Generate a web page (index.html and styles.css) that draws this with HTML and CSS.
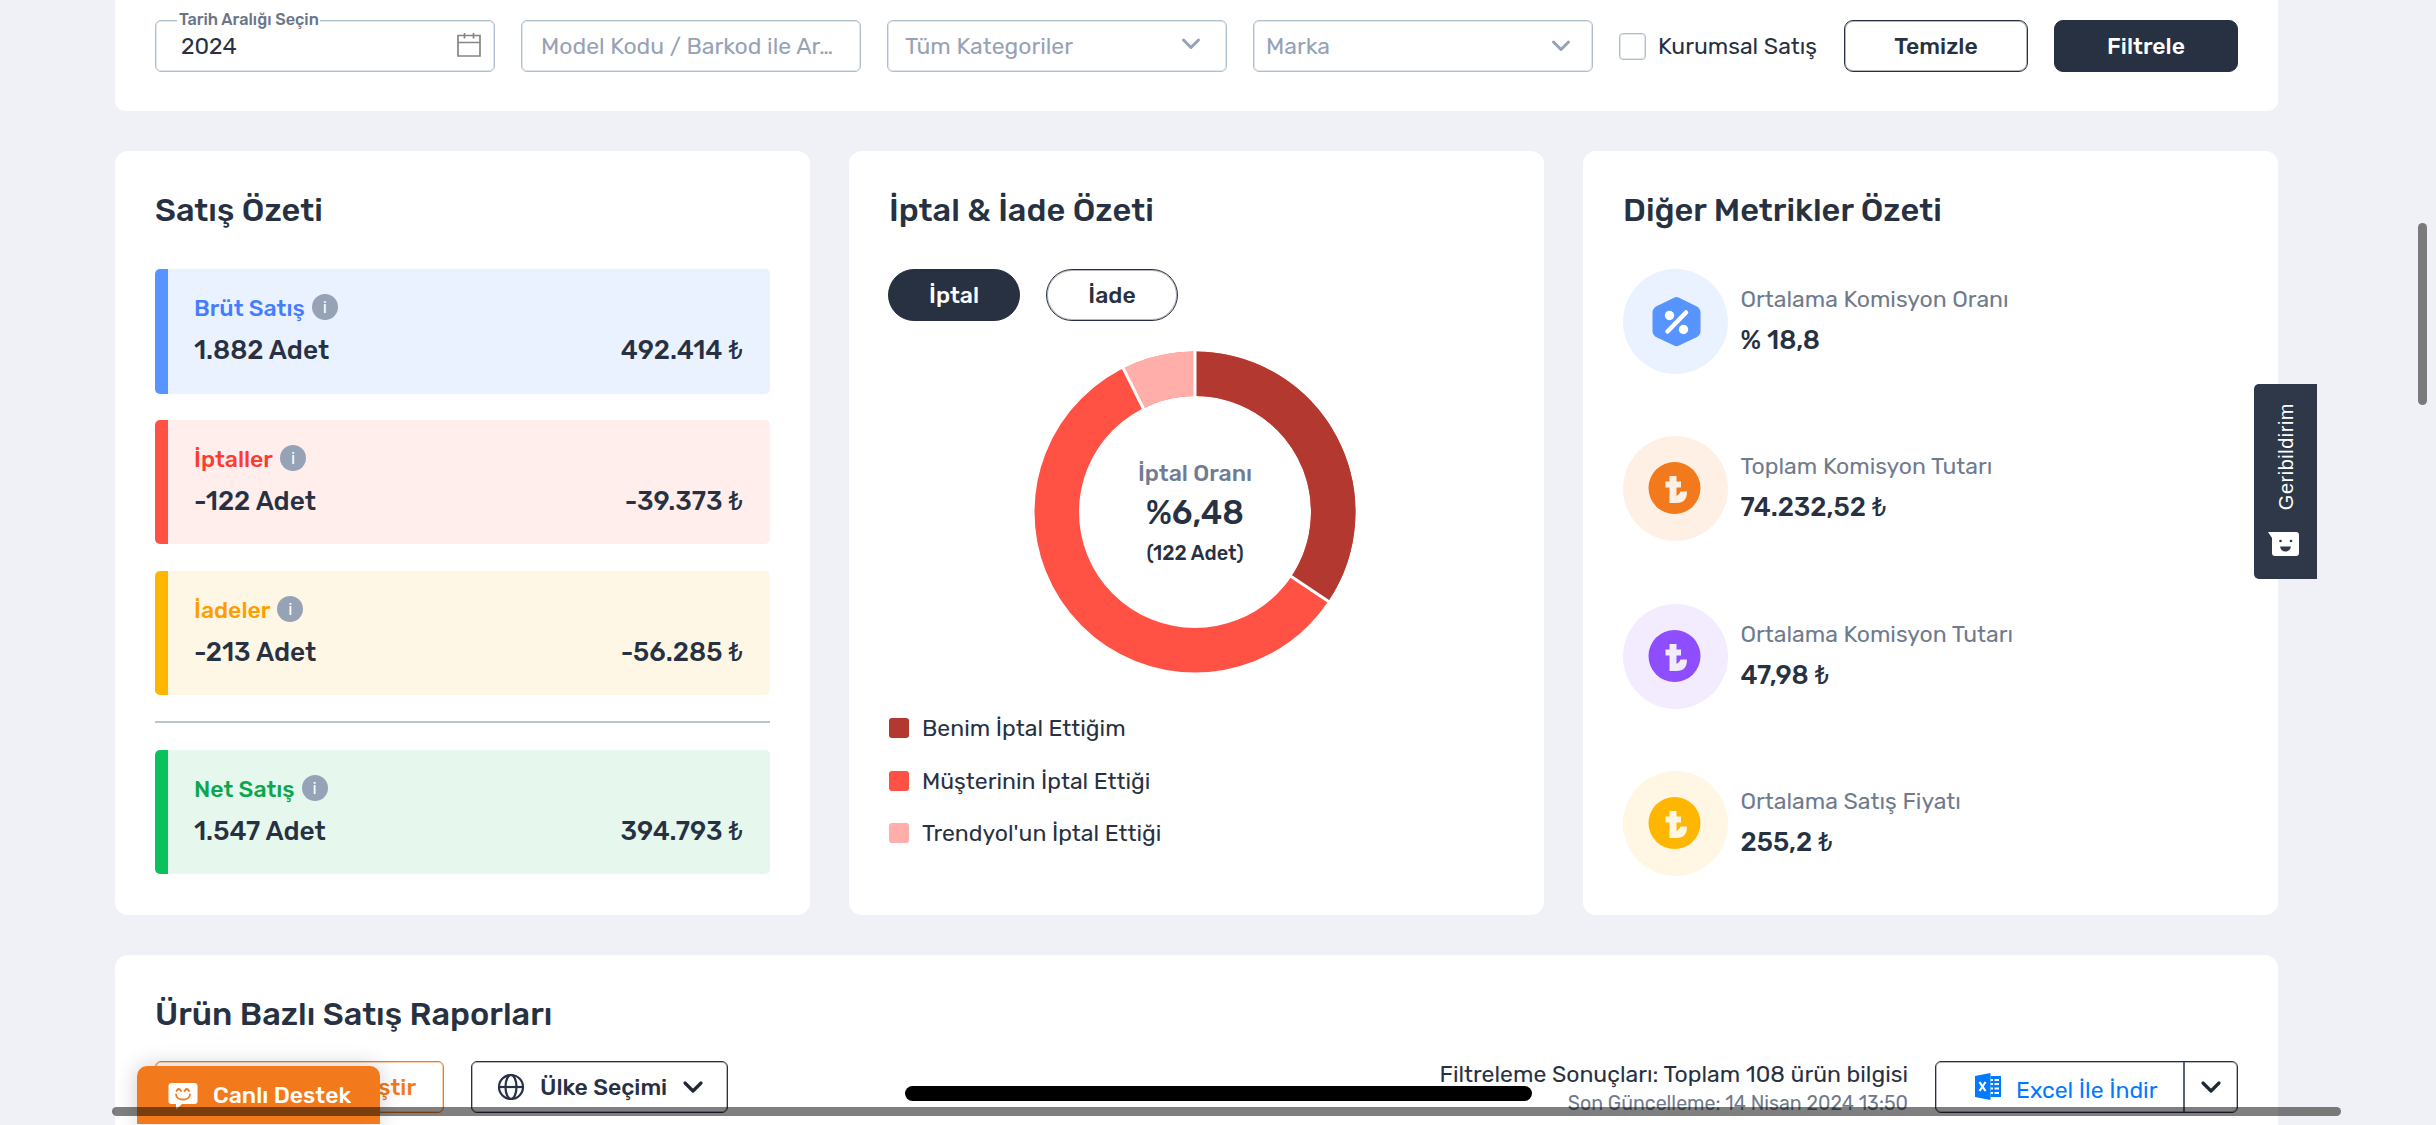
FILE: index.html
```html
<!DOCTYPE html>
<html lang="tr">
<head>
  <meta charset="UTF-8" />
  <title>Satış Raporları</title>
  <meta name="viewport" content="width=device-width, initial-scale=1" />
  <link rel="stylesheet" href="styles.css">
</head>
<body>
  <main class="page">
    <section class="card filters">
      <div class="field field-date">
        <span class="field-label">Tarih Aralığı Seçin</span>
        <span class="field-value">2024</span>
        <svg class="calendar" width="26" height="28" viewBox="0 0 26 28" fill="none" stroke="#858585" stroke-width="1.7">
          <path d="M2 4.5h22v20.500H2zM2 11.500h22M8.500 2v5.500M17.500 2v5.500" />
        </svg>
      </div>
      <div class="field field-text">Model Kodu / Barkod ile Ar…</div>
      <div class="field field-category">
        <span>Tüm Kategoriler</span>
        <svg class="arrow arrow-up" width="20" height="14" viewBox="0 0 20 14"><path d="M2.500 3l7.500 7.500L17.500 3" /></svg>
      </div>
      <div class="field field-brand">
        <span>Marka</span>
        <svg class="arrow" width="20" height="14" viewBox="0 0 20 14"><path d="M2.500 3l7.500 7.500L17.500 3" /></svg>
      </div>
      <label class="check"><span class="box"></span>Kurumsal Satış</label>
      <button class="btn">Temizle</button>
      <button class="btn btn-dark">Filtrele</button>
    </section>

    <div class="columns">
      <section class="card">
        <h2>Satış Özeti</h2>
        <div class="rows">
          <div class="row blue">
            <div class="row-title">Brüt Satış <span class="info">i</span></div>
            <div class="row-values"><span>1.882 Adet</span><span>492.414 <i>₺</i></span></div>
          </div>
          <div class="row red">
            <div class="row-title">İptaller <span class="info">i</span></div>
            <div class="row-values"><span>-122 Adet</span><span>-39.373 <i>₺</i></span></div>
          </div>
          <div class="row yellow">
            <div class="row-title">İadeler <span class="info">i</span></div>
            <div class="row-values"><span>-213 Adet</span><span>-56.285 <i>₺</i></span></div>
          </div>
          <hr>
          <div class="row green">
            <div class="row-title">Net Satış <span class="info">i</span></div>
            <div class="row-values"><span>1.547 Adet</span><span>394.793 <i>₺</i></span></div>
          </div>
        </div>
      </section>

      <section class="card">
        <h2>İptal &amp; İade Özeti</h2>
        <div class="pills">
          <button class="pill active">İptal</button>
          <button class="pill">İade</button>
        </div>
        <div class="donut">
          <svg width="322" height="322" viewBox="-161 -161 322 322">
            <g fill="none" stroke-width="44.500">
              <circle r="138.250" stroke="#ff5144" />
              <path d="M0 -138.250A138.250 138.250 0 0 1 114.880 76.910" stroke="#b23830" />
              <path d="M-61.690 -123.720A138.250 138.250 0 0 1 0 -138.250" stroke="#ffaea9" />
            </g>
            <path d="M0 -114v-49M94.700 63.400L135.500 90.700M-50.900 -102L-72.800 -145.900" stroke="#fff" stroke-width="3" />
          </svg>
          <div class="donut-text">
            <span class="donut-label">İptal Oranı</span>
            <span class="donut-value">%6,48</span>
            <span class="donut-count">(122 Adet)</span>
          </div>
        </div>
        <ul class="legend">
          <li><span class="swatch dark"></span>Benim İptal Ettiğim</li>
          <li><span class="swatch mid"></span>Müşterinin İptal Ettiği</li>
          <li><span class="swatch light"></span>Trendyol'un İptal Ettiği</li>
        </ul>
      </section>

      <section class="card">
        <h2>Diğer Metrikler Özeti</h2>
        <div class="metrics">
          <div class="metric">
            <div class="metric-icon percent">
              <svg width="105" height="105" viewBox="0 0 105 105">
                <path d="M51 28.700q2.500-1.200 5 0l17 8.200q4.500 2.500 4.500 6.500v18.500q0 4-4.500 6.500l-17 8.200q-2.500 1.200-5 0l-17-8.200q-4.500-2.500-4.500-6.500v-18.500q0-4 4.500-6.500z" fill="#5794ff" />
                <path d="M44.500 62.500L63 43.500" stroke="#fff" stroke-width="4.500" stroke-linecap="round" />
                <circle cx="46.500" cy="46.500" r="4.700" fill="#fff" />
                <circle cx="60.500" cy="60.500" r="4.700" fill="#fff" />
              </svg>
            </div>
            <div class="metric-text"><span>Ortalama Komisyon Oranı</span><strong>% 18,8</strong></div>
          </div>
          <div class="metric">
            <div class="metric-icon orange">
              <svg width="105" height="105" viewBox="0 0 105 105">
                <circle cx="51.500" cy="52" r="26" fill="#f37a1c" />
                <path d="M46.500 40h7v5.500h4.500v6h-4.500v8.500q3-1 4-4.500h6.500q0 11.500-10.500 11.500h-7v-15.500h-4v-6h4z" fill="#fff0e6" />
              </svg>
            </div>
            <div class="metric-text"><span>Toplam Komisyon Tutarı</span><strong>74.232,52 <i>₺</i></strong></div>
          </div>
          <div class="metric">
            <div class="metric-icon purple">
              <svg width="105" height="105" viewBox="0 0 105 105">
                <circle cx="51.500" cy="52" r="26" fill="#8e4dff" />
                <path d="M46.500 40h7v5.500h4.500v6h-4.500v8.500q3-1 4-4.500h6.500q0 11.500-10.500 11.500h-7v-15.500h-4v-6h4z" fill="#f3ecff" />
              </svg>
            </div>
            <div class="metric-text"><span>Ortalama Komisyon Tutarı</span><strong>47,98 <i>₺</i></strong></div>
          </div>
          <div class="metric">
            <div class="metric-icon amber">
              <svg width="105" height="105" viewBox="0 0 105 105">
                <circle cx="51.500" cy="52" r="26" fill="#ffb600" />
                <path d="M46.500 40h7v5.500h4.500v6h-4.500v8.500q3-1 4-4.500h6.500q0 11.500-10.500 11.500h-7v-15.500h-4v-6h4z" fill="#fff7e3" />
              </svg>
            </div>
            <div class="metric-text"><span>Ortalama Satış Fiyatı</span><strong>255,2 <i>₺</i></strong></div>
          </div>
        </div>
      </section>
    </div>

    <section class="card reports">
      <h2>Ürün Bazlı Satış Raporları</h2>
      <div class="toolbar">
        <button class="btn btn-orange">ştir</button>
        <button class="btn btn-country">
          <svg width="28" height="28" viewBox="0 0 28 28" fill="none" stroke="#273142" stroke-width="2.200">
            <circle cx="14" cy="14" r="12" />
            <ellipse cx="14" cy="14" rx="5.500" ry="12" />
            <path d="M2 14h24" />
          </svg>
          <span>Ülke Seçimi</span>
          <svg class="arrow arrow-dark" width="22" height="14" viewBox="0 0 22 14"><path d="M3 3l8 8L19 3" /></svg>
        </button>
        <div class="result">
          <span>Filtreleme Sonuçları: Toplam 108 ürün bilgisi</span>
          <small>Son Güncelleme: 14 Nisan 2024 13:50</small>
        </div>
        <div class="excel">
          <div class="excel-main">
            <svg width="27" height="27" viewBox="0 0 27 27">
              <path d="M0 3L15.500 0v27L0 24z" fill="#007bff" />
              <path d="M4.500 9l6 9M10.500 9l-6 9" stroke="#fff" stroke-width="2.200" />
              <path d="M15.500 3H26v21H15.500v-3h2.500v-2h-2.500v-2.500h2.500v-2h-2.500v-2.500h2.500v-2h-2.500V8h2.500V6h-2.500z" fill="#007bff" />
              <path d="M19.500 7h4.500M19.500 11h4.500M19.500 15.500h4.500M19.500 20h4.500" stroke="#fff" stroke-width="2" />
            </svg>
            <span>Excel İle İndir</span>
          </div>
          <div class="excel-more">
            <svg class="arrow arrow-dark" width="22" height="14" viewBox="0 0 22 14"><path d="M3 3l8 8L19 3" /></svg>
          </div>
        </div>
      </div>
    </section>
  </main>

  <div class="feedback">
    <span>Geribildirim</span>
    <svg width="32" height="26" viewBox="0 0 32 26">
      <path d="M0 1h28q3 0 3 3v18q0 3-3 3H7q-3 0-3-3V7z" fill="#fff" />
      <path d="M12 15.500h11q-1 5-5.500 5t-5.500-5z" fill="#2f3848" />
      <circle cx="12.500" cy="10" r="1.300" fill="#2f3848" />
      <circle cx="23" cy="10" r="1.300" fill="#2f3848" />
    </svg>
  </div>

  <div class="support">
    <svg width="30" height="27" viewBox="0 0 30 27">
      <path d="M3.500 0h23q3 0 3 3v15q0 3-3 3H14l-6 5.500V21H3.500q-3 0-3-3V3q0-3 3-3z" fill="#fff" />
      <path d="M8.500 8q2.300-4 4.600 0M16.500 8q2.300-4 4.600 0M8 11.500q.5 5 7 5t7-5" fill="none" stroke="#f37a1c" stroke-width="1.800" stroke-linecap="round" />
    </svg>
    <span>Canlı Destek</span>
  </div>

  <div class="home-bar"></div>
  <div class="scroll-x"></div>
  <div class="scroll-y"></div>
</body>
</html>
```

FILE: styles.css
```css
* {
  box-sizing: border-box;
}
body {
  margin: 0;
  height: 1125px;
  overflow: hidden;
  position: relative;
  background: #f0f1f7;
  color: #273142;
  font-family: Rubik, Roboto, sans-serif;
  font-size: 23px;
  line-height: 30px;
}
button {
  font: inherit;
  color: inherit;
}
svg {
  display: block;
  flex: none;
}
.page {
  width: 2163px;
  margin-left: 115px;
}
.card {
  background: #fff;
  border-radius: 13px;
  padding: 40px;
}
h2 {
  margin: 0 0 40px;
  font-size: 32.6px;
  line-height: 38px;
  font-weight: 500;
}

/* filters */
.filters {
  display: flex;
  gap: 26px;
  height: 111px;
  padding: 20px 40px 0;
  border-radius: 0 0 10px 10px;
}
.field {
  position: relative;
  flex: none;
  display: flex;
  align-items: center;
  justify-content: space-between;
  width: 340px;
  height: 52px;
  border: 1px solid #b0bed0;
  box-shadow: inset 0 0 0 1px rgba(176, 190, 208, 0.4);
  border-radius: 6px;
  color: #96a2b6;
}
.field-date {
  padding: 0 12px 0 25px;
  color: #273142;
}
.calendar {
  margin-top: -2px;
}
.field-label {
  position: absolute;
  left: 21px;
  top: -11px;
  padding: 0 1px 0 2px;
  background: #fff;
  color: #6b7588;
  font-size: 16.3px;
  line-height: 20px;
  font-weight: 500;
  white-space: nowrap;
}
.field-text {
  padding-left: 19px;
}
.field-category {
  padding: 0 25px 0 17px;
}
.field-brand {
  padding: 0 21px 0 12px;
}
.arrow {
  fill: none;
  stroke: #96a2b6;
  stroke-width: 3;
  stroke-linecap: round;
  stroke-linejoin: round;
}
.arrow-up {
  margin-top: -4px;
}
.arrow-dark {
  stroke: #1f2733;
  stroke-width: 3.2;
}
.check {
  flex: 1;
  display: flex;
  align-items: center;
  gap: 12px;
  height: 52px;
  white-space: nowrap;
}
.box {
  flex: none;
  width: 27px;
  height: 27px;
  border: 1px solid #b0bed0;
  box-shadow: inset 0 0 0 1px rgba(176, 190, 208, 0.4);
  border-radius: 4px;
}
.btn {
  flex: none;
  width: 184px;
  height: 52px;
  padding: 0;
  background: #fff;
  border: 1px solid #273142;
  box-shadow: inset 0 0 0 1px rgba(39, 49, 66, 0.35);
  border-radius: 9px;
  font-weight: 500;
}
.btn-dark {
  background: #273142;
  color: #fff;
}

/* summary columns */
.columns {
  display: grid;
  grid-template-columns: repeat(3, 1fr);
  gap: 39px;
  margin: 40px 0;
}
.columns .card {
  height: 764px;
}
.rows {
  display: flex;
  flex-direction: column;
  gap: 26.3px;
}
.row {
  height: 124.5px;
  padding: 24px 27px 0 26px;
  border-left: 13px solid;
  border-radius: 5px;
}
.row-title {
  display: flex;
  align-items: center;
  gap: 7px;
  font-weight: 500;
}
.row-values {
  display: flex;
  justify-content: space-between;
  margin-top: 13px;
  font-size: 26.2px;
  font-weight: 500;
}
i {
  font-style: normal;
  font-weight: 400;
}
.info {
  width: 26px;
  height: 26px;
  margin-bottom: 2px;
  border-radius: 50%;
  background: #96a2b6;
  color: #fff;
  font-size: 17px;
  line-height: 26px;
  font-weight: 400;
  text-align: center;
}
.blue { border-color: #5794ff; background: #ebf2ff; }
.blue .row-title { color: #447eff; }
.red { border-color: #ff5144; background: #ffeeec; }
.red .row-title { color: #ff3a2f; }
.yellow { border-color: #ffb600; background: #fff7e5; }
.yellow .row-title { color: #ff9d00; }
.green { border-color: #0bc15c; background: #e6f7ed; }
.green .row-title { color: #0ba74d; }
hr {
  width: 100%;
  height: 2px;
  margin: 0;
  border: 0;
  background: #bac5d2;
}

.pills {
  display: flex;
  gap: 26px;
  margin-left: -1px;
}
.pill {
  width: 132px;
  height: 52px;
  padding: 0;
  background: #fff;
  border: 1px solid #273142;
  box-shadow: inset 0 0 0 1px rgba(39, 49, 66, 0.35);
  border-radius: 26px;
  font-weight: 500;
}
.pill.active {
  background: #273142;
  color: #fff;
}
.donut {
  display: grid;
  justify-items: center;
  align-items: center;
  margin: 30px 0 40px -3px;
}
.donut > * {
  grid-area: 1 / 1;
}
.donut-text {
  display: flex;
  flex-direction: column;
  align-items: center;
  font-weight: 500;
}
.donut-label {
  color: #717c90;
}
.donut-value {
  margin-top: 6px;
  font-size: 33px;
  line-height: 38px;
}
.donut-count {
  margin-top: 8px;
  font-size: 19.9px;
  line-height: 26px;
}
.legend {
  display: flex;
  flex-direction: column;
  gap: 22.5px;
  margin: 0;
  padding: 0;
  list-style: none;
}
.legend li {
  display: flex;
  align-items: center;
  gap: 13px;
}
.swatch {
  width: 20px;
  height: 20px;
  border-radius: 3px;
}
.dark { background: #b23830; }
.mid { background: #ff5144; }
.light { background: #ffaea9; }

.metrics {
  display: flex;
  flex-direction: column;
  gap: 62.3px;
  margin-left: -0.5px;
}
.metric {
  display: flex;
  gap: 13px;
}
.metric-icon {
  width: 105px;
  height: 105px;
  border-radius: 50%;
}
.percent { background: #ebf2ff; }
.orange { background: #fff0e6; }
.purple { background: #f3ecff; }
.amber { background: #fff7e3; }
.metric-text {
  display: flex;
  flex-direction: column;
  gap: 12px;
  padding-top: 15px;
  color: #6f7b8d;
}
.metric-text strong {
  color: #273142;
  font-size: 26.2px;
  font-weight: 500;
}

/* reports */
.reports {
  height: 200px;
}
.reports h2 {
  margin-bottom: 28px;
}
.toolbar {
  display: flex;
}
.toolbar .btn {
  border-radius: 6px;
}
.toolbar .btn-orange {
  width: 289px;
  padding-right: 27px;
  border-color: #f37a1c;
  box-shadow: inset 0 0 0 1px rgba(243, 122, 28, 0.35);
  color: #f37a1c;
  text-align: right;
}
.toolbar .btn-country {
  display: flex;
  align-items: center;
  width: 257px;
  margin-left: 27px;
  padding-left: 25px;
}
.btn-country span {
  margin: 0 15px;
}
.result {
  display: flex;
  flex-direction: column;
  align-items: flex-end;
  margin: -2px 27px 0 auto;
}
.result small {
  font-size: 19.6px;
  line-height: 26px;
  margin-top: 2px;
  color: #6f7b8d;
}
.excel {
  display: flex;
  width: 303px;
  height: 52px;
  border: 1px solid #273142;
  box-shadow: inset 0 0 0 1px rgba(39, 49, 66, 0.35);
  border-radius: 6px;
}
.excel-main {
  flex: 1;
  display: flex;
  gap: 14px;
  padding: 11px 0 0 39px;
  color: #007bff;
}
.excel-main span {
  margin-top: 2px;
}
.excel-more {
  display: flex;
  align-items: center;
  justify-content: center;
  width: 54px;
  border-left: 2px solid #5d6573;
}

/* overlays */
.feedback {
  position: absolute;
  left: 2254px;
  top: 384px;
  width: 63px;
  height: 195px;
  display: flex;
  flex-direction: column;
  align-items: center;
  gap: 21px;
  padding-top: 19px;
  background: #2f3848;
  border-radius: 5px 0 0 5px;
  color: #fff;
  font-family: "Liberation Sans", sans-serif;
  font-size: 20px;
  letter-spacing: 0.025em;
}
.feedback span {
  writing-mode: vertical-rl;
  transform: rotate(180deg);
}
.feedback svg {
  margin-right: 4px;
}
.support {
  position: absolute;
  left: 137px;
  top: 1066px;
  width: 243px;
  height: 58px;
  display: flex;
  gap: 15px;
  padding: 17px 0 0 31px;
  background: #f37a1c;
  border-radius: 10px 10px 0 0;
  box-shadow: 0 0 22px rgba(0, 0, 0, 0.2);
  color: #fff;
  font-weight: 500;
}
.support span {
  margin-top: -3px;
}
.home-bar {
  position: absolute;
  left: 905px;
  top: 1086px;
  width: 627px;
  height: 15px;
  border-radius: 8px;
  background: #000;
}
.scroll-x {
  position: absolute;
  left: 112px;
  top: 1107px;
  width: 2229px;
  height: 9px;
  border-radius: 5px;
  background: rgba(0, 0, 0, 0.5);
}
.scroll-y {
  position: absolute;
  left: 2418px;
  top: 223px;
  width: 9px;
  height: 182px;
  border-radius: 5px;
  background: #7a7a7c;
}
```
